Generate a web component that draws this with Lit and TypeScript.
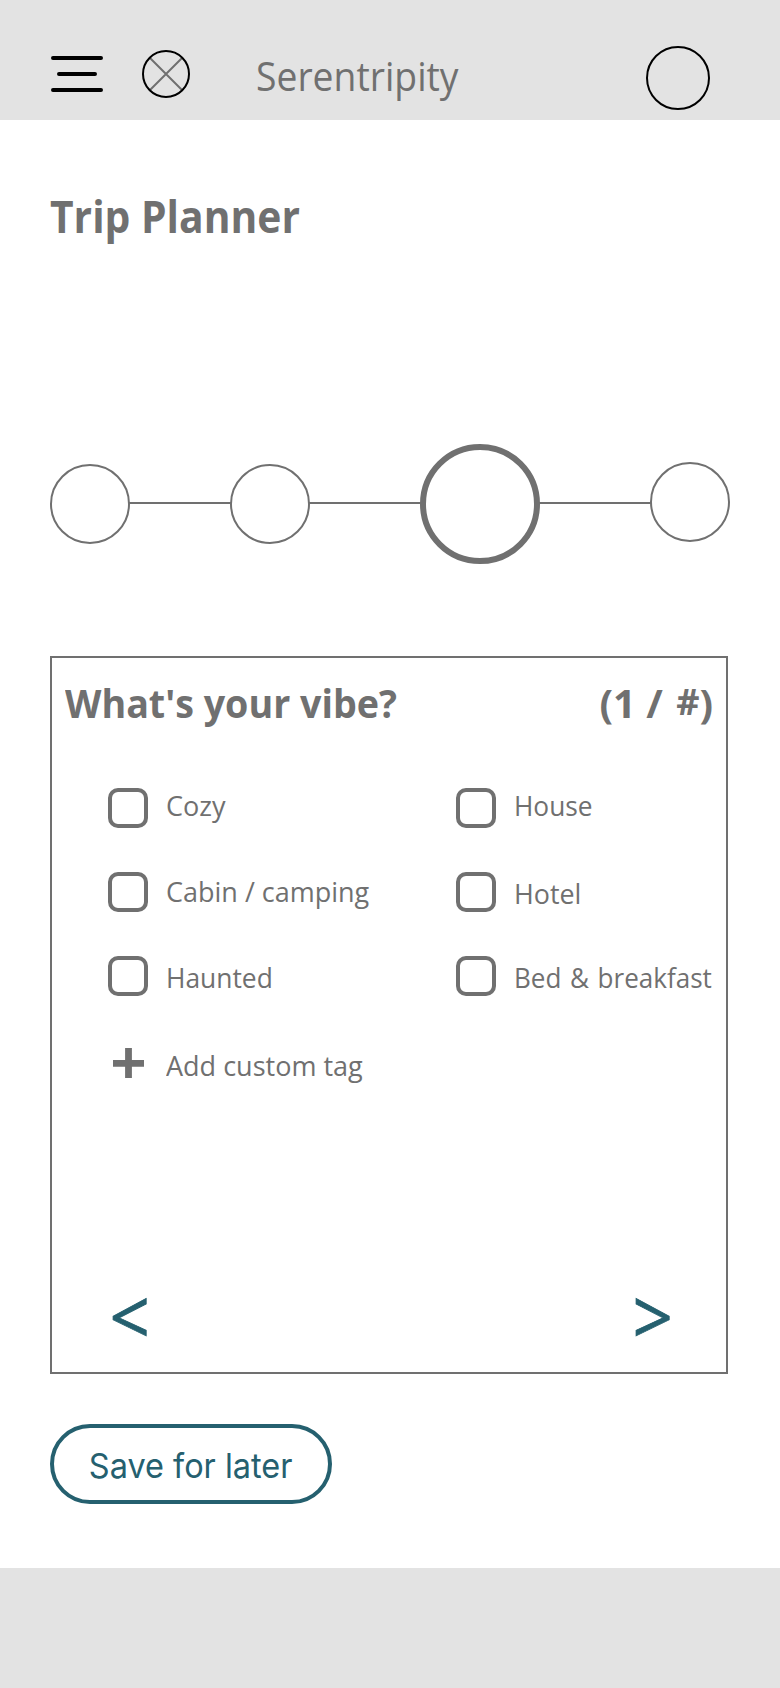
import { LitElement, html, css } from "lit";
import { customElement, property } from "lit/decorators.js";
import { styleMap } from "lit/directives/style-map.js";

interface Tag {
  label: string;
  /** horizontal condensing of the label */
  fit: number;
  /** extra space above the label inside its row */
  drop: number;
  /** extra space between words */
  gap?: number;
}

const LODGING_MOOD: Tag[] = [
  { label: "Cozy", fit: 0.966, drop: 0 },
  { label: "Cabin / camping", fit: 0.964, drop: 2 },
  { label: "Haunted", fit: 0.942, drop: 4 },
];

const LODGING_TYPE: Tag[] = [
  { label: "House", fit: 0.938, drop: 0 },
  { label: "Hotel", fit: 0.959, drop: 4 },
  { label: "Bed & breakfast", fit: 0.93, drop: 4, gap: 2 },
];

@customElement("app-header")
export class AppHeader extends LitElement {
  static styles = css`
    :host {
      display: flex;
      align-items: flex-start;
      box-sizing: border-box;
      height: 120px;
      background: #e3e3e3;
      color: #707070;
    }
    svg {
      display: block;
      flex: none;
    }
    .menu {
      margin: 56px 0 0 51px;
    }
    .logo {
      margin: 50px 0 0 39px;
    }
    .name {
      flex: 1;
      margin: 48px 0 0 66px;
      font-size: 40px;
      line-height: 56px;
      white-space: nowrap;
    }
    .name span {
      display: inline-block;
      transform: scaleX(0.932);
      transform-origin: left;
    }
    .avatar {
      box-sizing: border-box;
      width: 64px;
      height: 64px;
      margin: 46px 70px 0 0;
      border: 2px solid #000;
      border-radius: 50%;
    }
  `;

  render() {
    return html`
      <svg class="menu" width="52" height="36" viewBox="0 0 52 36">
        <path d="M2 2H50M8 18H44M2 34H50" stroke="#000" stroke-width="4" stroke-linecap="round" />
      </svg>
      <svg class="logo" width="48" height="48" viewBox="0 0 48 48" fill="none" stroke-width="2">
        <path d="M8 8L40 40M40 8L8 40" stroke="#707070" />
        <circle cx="24" cy="24" r="23" stroke="#000" />
      </svg>
      <div class="name"><span>Serentripity</span></div>
      <div class="avatar"></div>
    `;
  }
}

@customElement("trip-steps")
export class TripSteps extends LitElement {
  static styles = css`
    :host {
      display: flex;
      align-items: flex-start;
      height: 120px;
      width: 680px;
    }
    .dot {
      flex: none;
      box-sizing: border-box;
      width: 80px;
      height: 80px;
      margin-top: 20px;
      border: 2px solid #707070;
      border-radius: 50%;
    }
    .dot.current {
      width: 120px;
      height: 120px;
      margin-top: 0;
      border-width: 6px;
    }
    .dot.last {
      margin-top: 18px;
    }
    .link {
      flex: none;
      height: 2px;
      margin: 58px -1px 0;
      background: #707070;
    }
    .link.a { width: 102px; }
    .link.b { width: 112px; }
    .link.c { width: 112px; }
  `;

  render() {
    return html`
      <div class="dot"></div>
      <div class="link a"></div>
      <div class="dot"></div>
      <div class="link b"></div>
      <div class="dot current"></div>
      <div class="link c"></div>
      <div class="dot last"></div>
    `;
  }
}

@customElement("tag-option")
export class TagOption extends LitElement {
  @property({ attribute: false }) tag!: Tag;

  static styles = css`
    :host {
      display: flex;
      height: 40px;
      align-items: flex-start;
    }
    .box {
      flex: none;
      box-sizing: border-box;
      width: 40px;
      height: 40px;
      border: 4px solid #707070;
      border-radius: 10px;
    }
    .label {
      margin-left: 18px;
      font-size: 28px;
      line-height: 34px;
      white-space: nowrap;
      transform-origin: left;
    }
  `;

  render() {
    const { label, fit, drop, gap = 0 } = this.tag;
    return html`
      <div class="box"></div>
      <div
        class="label"
        style=${styleMap({
          transform: `scaleX(${fit})`,
          marginTop: `${drop}px`,
          wordSpacing: `${gap}px`,
        })}
      >${label}</div>
    `;
  }
}

@customElement("vibe-card")
export class VibeCard extends LitElement {
  static styles = css`
    :host {
      display: flex;
      flex-direction: column;
      box-sizing: border-box;
      width: 678px;
      height: 718px;
      border: 2px solid #707070;
      color: #707070;
    }
    .head {
      display: flex;
      justify-content: space-between;
      height: 56px;
      padding: 17px 13px 0 13px;
      font-size: 40px;
      font-weight: 700;
      line-height: 56px;
      white-space: nowrap;
    }
    .question {
      transform: scaleX(0.941);
      transform-origin: left;
    }
    .hash {
      margin-left: 3px;
      font-size: 36px;
      line-height: 1;
      vertical-align: 3px;
    }
    .options {
      display: grid;
      grid-template-columns: 348px 1fr;
      padding: 57px 0 0 56px;
    }
    .column {
      display: flex;
      flex-direction: column;
      gap: 44px;
    }
    .add {
      display: flex;
      height: 40px;
      font-size: 28px;
      line-height: 34px;
      white-space: nowrap;
    }
    .add svg {
      display: block;
      margin: 8px 22px 0 5px;
      flex: none;
    }
    .add span {
      margin-top: 8px;
      transform: scaleX(0.965);
      transform-origin: left;
    }
    .nav {
      display: flex;
      justify-content: space-between;
      margin-top: auto;
      padding: 0 53px 17px 57px;
      color: #25606f;
      font-size: 72px;
      line-height: 80px;
      -webkit-text-stroke: 0.8px #25606f;
    }
    .nav span {
      transform: scale(0.98, 1.06);
    }
  `;

  render() {
    return html`
      <div class="head">
        <span class="question">What's your vibe?</span>
        <span>(1 / <span class="hash">#</span>)</span>
      </div>
      <div class="options">
        <div class="column">
          ${LODGING_MOOD.map((t) => html`<tag-option .tag=${t}></tag-option>`)}
          <div class="add">
            <svg width="31" height="30" viewBox="0 0 31 30">
              <path d="M0 15.3H31M15.5 0V30" stroke="#707070" stroke-width="6.8" />
            </svg>
            <span>Add custom tag</span>
          </div>
        </div>
        <div class="column">
          ${LODGING_TYPE.map((t) => html`<tag-option .tag=${t}></tag-option>`)}
        </div>
      </div>
      <div class="nav"><span>&lt;</span><span>&gt;</span></div>
    `;
  }
}

@customElement("app-root")
export class AppRoot extends LitElement {
  static styles = css`
    :host {
      display: flex;
      flex-direction: column;
      width: 780px;
      height: 1688px;
      overflow: hidden;
      background: #fff;
      color: #707070;
      font-family: "Open Sans", "Noto Sans", sans-serif;
    }
    main {
      flex: 1;
      padding: 68px 50px 0;
    }
    h1 {
      margin: 0;
      height: 56px;
      font-size: 44px;
      font-weight: 700;
      line-height: 56px;
      white-space: nowrap;
    }
    h1 span {
      display: inline-block;
      transform: scaleX(0.927);
      transform-origin: left;
    }
    trip-steps {
      margin-top: 200px;
    }
    vibe-card {
      margin-top: 92px;
    }
    .save {
      display: flex;
      justify-content: center;
      box-sizing: border-box;
      width: 282px;
      height: 80px;
      margin: 50px 0 0;
      padding: 10px 0 0;
      border: 4px solid #25606f;
      border-radius: 40px;
      background: none;
      color: #25606f;
      font: 400 34px/56px Inter, sans-serif;
      white-space: nowrap;
    }
    .save span {
      transform: scaleX(0.955);
    }
    footer {
      height: 120px;
      background: #e3e3e3;
    }
  `;

  render() {
    return html`
      <app-header></app-header>
      <main>
        <h1><span>Trip Planner</span></h1>
        <trip-steps></trip-steps>
        <vibe-card></vibe-card>
        <button class="save"><span>Save for later</span></button>
      </main>
      <footer></footer>
    `;
  }
}
